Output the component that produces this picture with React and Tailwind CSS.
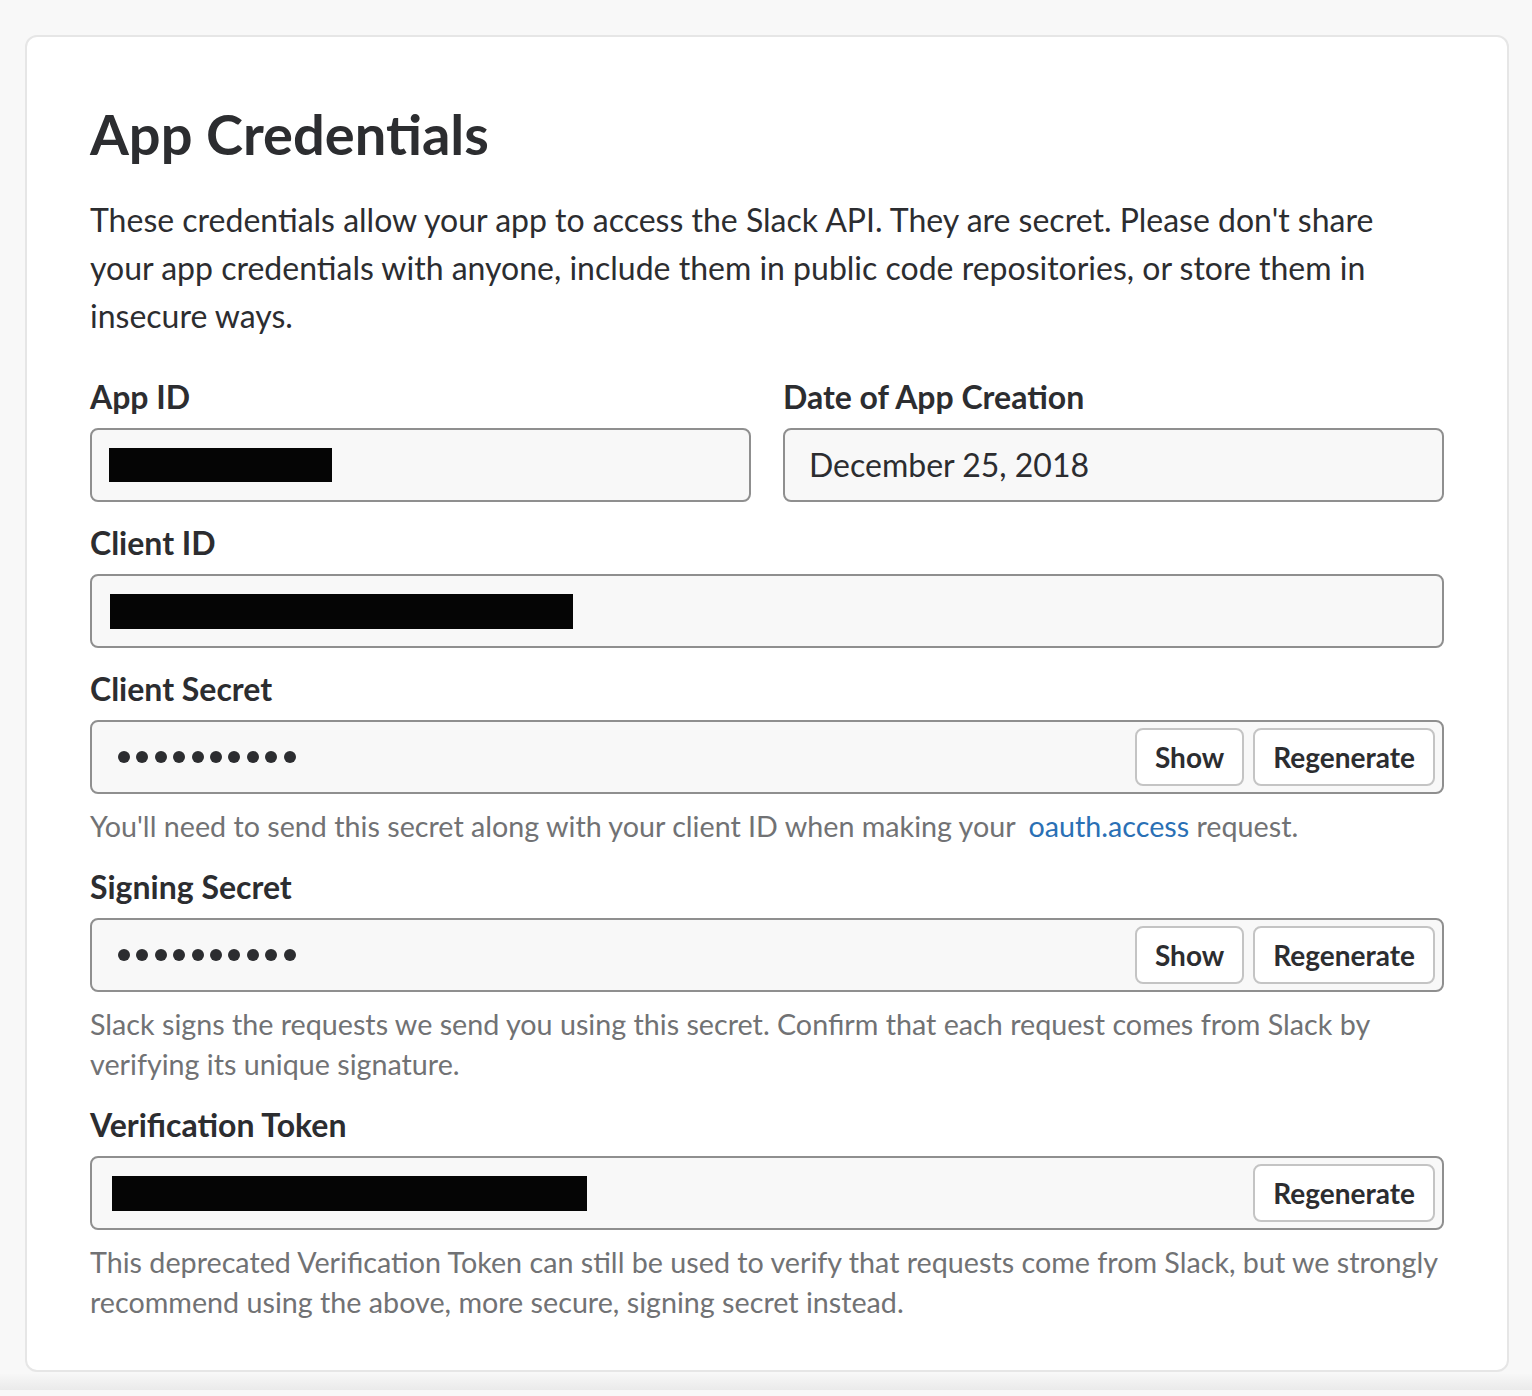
import React from "react";

const Label = ({ children }) => (
  <div className="text-[32px] font-bold leading-[40px] mb-[11px]">{children}</div>
);

const Help = ({ children }) => (
  <p className="mt-[12px] text-[28.7px] leading-[40px] text-[#717274]">{children}</p>
);

const Dots = () => (
  <div className="flex gap-[6.4px] ml-[2px]">
    {Array.from({ length: 10 }).map((_, i) => (
      <div key={i} className="w-[12px] h-[12px] rounded-full bg-[#2c2d30]" />
    ))}
  </div>
);

const Btn = ({ children }) => (
  <button className="h-[58px] px-[18px] rounded-[8px] border-2 border-[#c4c4c4] bg-white text-[28px] font-bold text-[#2c2d30]">
    {children}
  </button>
);

const Field = ({ children, buttons }) => (
  <div className="h-[74px] flex items-center justify-between rounded-[8px] border-2 border-[#8f8f8f] bg-[#f8f8f8] pl-[24px] pr-[7px]">
    <div className="flex items-center">{children}</div>
    {buttons && <div className="flex gap-[9px]">{buttons}</div>}
  </div>
);

export default function App() {
  return (
    <div className="min-h-[1396px] bg-[#f8f8f8] pt-[35px] font-['Lato',sans-serif] text-[#2c2d30]">
      <div className="ml-[25px] mr-[23px] bg-white border-2 border-[#e6e6e6] rounded-[12px] px-[63px] pt-[63px] pb-[48px]">
        <h1 className="text-[56px] font-bold leading-[1.2]">App Credentials</h1>
        <p className="mt-[29px] max-w-[1300px] text-[32px] leading-[48px]">
          These credentials allow your app to access the Slack API. They are secret. Please don't share
          your app credentials with anyone, include them in public code repositories, or store them in
          insecure ways.
        </p>

        <div className="mt-[37px] grid grid-cols-2 gap-x-[32px]">
          <div>
            <Label>App ID</Label>
            <Field>
              <div className="ml-[-7px] w-[223px] h-[34px] bg-[#050505]" />
            </Field>
          </div>
          <div>
            <Label>Date of App Creation</Label>
            <Field>
              <span className="text-[32px]">December 25, 2018</span>
            </Field>
          </div>
        </div>

        <div className="mt-[21px]">
          <Label>Client ID</Label>
          <Field>
            <div className="ml-[-6px] w-[463px] h-[35px] bg-[#050505]" />
          </Field>
        </div>

        <div className="mt-[21px]">
          <Label>Client Secret</Label>
          <Field buttons={<><Btn>Show</Btn><Btn>Regenerate</Btn></>}>
            <Dots />
          </Field>
          <Help>
            You'll need to send this secret along with your client ID when making your{" "}
            <a className="text-[#2a70b5] ml-[6px]">oauth.access</a> request.
          </Help>
        </div>

        <div className="mt-[21px]">
          <Label>Signing Secret</Label>
          <Field buttons={<><Btn>Show</Btn><Btn>Regenerate</Btn></>}>
            <Dots />
          </Field>
          <Help>
            Slack signs the requests we send you using this secret. Confirm that each request comes from Slack by
            verifying its unique signature.
          </Help>
        </div>

        <div className="mt-[21px]">
          <Label>Verification Token</Label>
          <Field buttons={<Btn>Regenerate</Btn>}>
            <div className="ml-[-4px] w-[475px] h-[35px] bg-[#050505]" />
          </Field>
          <Help>
            This deprecated Verification Token can still be used to verify that requests come from Slack, but we strongly
            recommend using the above, more secure, signing secret instead.
          </Help>
        </div>
      </div>
      <div className="mt-[2px] h-[16px] bg-gradient-to-b from-[#f7f7f7] to-[#eaeaea]" />
    </div>
  );
}
